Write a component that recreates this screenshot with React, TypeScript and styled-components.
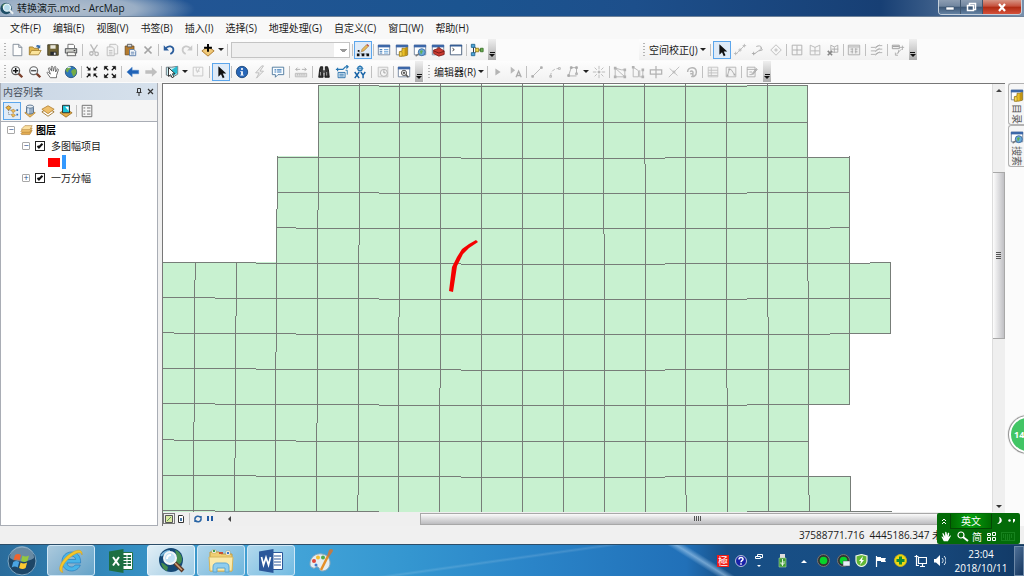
import React from 'react';
import styled, { createGlobalStyle, css } from 'styled-components';

const GlobalStyle = createGlobalStyle`
  *, *::before, *::after { box-sizing: border-box; }
  html, body { margin: 0; padding: 0; }
  body {
    font-family: "Open Sans", "Noto Sans CJK SC", sans-serif;
    font-size: 10px;
    line-height: 14px;
    color: #1a1a1a;
    overflow: hidden;
  }
  button { font: inherit; color: inherit; padding: 0; border: 0; background: none; }
  ul { list-style: none; margin: 0; padding: 0; }
`;

/* ---------- icons ---------- */

const G = '#b9b9b9';

const windowFrame = (
  <>
    <path d="M1.500 2.500h13v11h-13z" fill="#fff" stroke="#6d7f99" />
    <path d="M1 2h14v3H1z" fill="#3c67a8" />
  </>
);
const cursor = <path d="M5 1.500v12l3-2.800 2 4.300 2-1-2-4.200h4z" fill="#111" />;

const icons: Record<string, React.ReactNode> = {
  new: <path d="M3.500 1.500h6.500l3.500 3.500v9.500h-10zM10 1.500V5h3.500" fill="#fdfdfd" stroke="#7c8794" />,
  open: (
    <>
      <path d="M1.500 13.500v-9h4l1.500 1.500h5v3" fill="#e3b74d" stroke="#9c7a2c" />
      <path d="M1.500 13.500 4 8.500h11l-3 5z" fill="#fbe49b" stroke="#a88533" />
      <path d="M9 4c1-2 3-2 4-1l1-1v4h-4l1.500-1.500" fill="#3a6ea8" />
    </>
  ),
  save: (
    <>
      <path d="M2 2h12v12H2z" fill="#6e6234" stroke="#3d3823" />
      <path d="M5 2.500h6v4H5z" fill="#e9e7da" />
      <path d="M5 10h7v4H5z" fill="#262a30" />
      <path d="M9 11h2v2.500H9z" fill="#eee" />
    </>
  ),
  print: (
    <>
      <path d="M4.500 6V1.500h6l1.500 1.500v3" fill="#fff" stroke="#666" />
      <path d="M1.500 6.500h13v5h-13z" fill="#cfd0cb" stroke="#3f4246" />
      <path d="M4 10.500h8.500l1 4h-10z" fill="#f4f4f0" stroke="#555" />
      <path d="M11 8h2v1h-2z" fill="#333" />
    </>
  ),
  cut: (
    <g fill="none" stroke={G} strokeWidth="1.500">
      <path d="M4 1.500 9.500 11M12 2 6 11" />
      <circle cx="5" cy="12" r="2" />
      <circle cx="11" cy="12.500" r="2" />
    </g>
  ),
  copy: (
    <g fill="#f4f4f4" stroke={G}>
      <path d="M5.500 1.500h7l2 2v9h-9z" />
      <path d="M2.500 4.500h6l2 2v8h-8zM4.500 8.500h4M4.500 10.500h4M4.500 12.500h4" />
    </g>
  ),
  paste: (
    <>
      <path d="M2.500 3.500h10v10h-10z" fill="#b57b2d" stroke="#75501f" />
      <path d="M5 1.500h5v3H5z" fill="#ddd" stroke="#555" />
      <path d="M7.500 7.500h5l2 2v5h-7z" fill="#fff" stroke="#4e76a8" />
      <path d="M9 10.500h4M9 12.500h4" stroke="#4e76a8" />
    </>
  ),
  del: <path d="m4 4 8 8M12 4l-8 8" stroke="#a4a4a4" strokeWidth="2" />,
  undo: (
    <>
      <path d="M4 6.500c3-4.500 9.500-3 9 2-.2 2-1.500 3.200-3.500 4" fill="none" stroke="#2b5d9c" strokeWidth="2" />
      <path d="M2 2.500v6h6z" fill="#2b5d9c" />
    </>
  ),
  redo: (
    <>
      <path d="M12 6.500c-3-4.500-9.500-3-9 2 .2 2 1.500 3.200 3.500 4" fill="none" stroke="#cacaca" strokeWidth="2" />
      <path d="M14 2.500v6H8z" fill="#cacaca" />
    </>
  ),
  add: (
    <>
      <path d="m1 9 7-5 7 5-7 6z" fill="#f1c978" stroke="#a8762c" />
      <path d="M8 1v9M3.500 5.500h9" stroke="#000" strokeWidth="2.200" />
    </>
  ),
  editor: (
    <>
      <path d="M3 9.500 6 12.500h7" fill="none" stroke="#444" strokeDasharray="1 1" />
      <path d="M1 12h3v3H1zM6.500 12h3v3h-3zM12 12h3v3h-3zM2 8h2v2H2z" fill="#111" />
      <path d="m6 10 1-3 5-5 2 2-5 5z" fill="#e8b95a" stroke="#8e6530" strokeWidth=".6" />
      <path d="m12 2 1-1 2 2-1 1z" fill="#b64545" />
    </>
  ),
  toc: <>{windowFrame}<path d="M3 7.500h3M3 9.500h3M3 11.500h3" stroke="#2b6cb0" /><path d="M8 7.500h5M8 9.500h5M8 11.500h5" stroke="#5b9bd5" /></>,
  catalog: <>{windowFrame}<path d="m5 10 3-1V6h3l3-1v9l-4 1H5z" fill="#e9bf28" stroke="#8d6b10" strokeWidth=".8" /><path d="M11 6v8l3-1V5z" fill="#c29512" /><path d="M5 10h3v5H5z" fill="#f4d95c" stroke="#8d6b10" strokeWidth=".6" /></>,
  search: <>{windowFrame}<circle cx="10" cy="10.500" r="4" fill="#69a9d8" stroke="#3a6ba2" /><path d="M8 9c2-2 4 0 3 1s-1 3-2 3" fill="#5fae52" /><path d="m3 15 4-3" stroke="#777" strokeWidth="1.500" /></>,
  toolbox: <>{windowFrame}<path d="m3 8 7-2 5 3v4l-6 2-6-3z" fill="#cb3a30" stroke="#86211b" /><path d="m3 9 6 2.500 6-2M7 6.500c0-2 3-2 3-.5" fill="none" stroke="#6d1814" /></>,
  python: <><path d="M1.500 2.500h13v11h-13z" fill="#fff" stroke="#3d5575" /><path d="M1 2h14v2H1z" fill="#355d95" /><path d="m4 6 2 1.500L4 9" fill="none" stroke="#222" /></>,
  model: (
    <>
      <path d="M4 3.500v9M5 4l3 4-3 4M8 8h5" fill="none" stroke="#222" />
      <path d="M1.500 1.500h4v3.500h-4zM1.500 11h4v3.500h-4z" fill="#4ea4d9" stroke="#246891" />
      <path d="M6.500 6h3.500v4H6.500z" fill="#f2d74a" stroke="#93811c" />
      <path d="M12 6h3v4h-3z" fill="#68ad50" stroke="#3c7229" />
    </>
  ),
  zoomin: <><circle cx="6.500" cy="6.500" r="4.500" fill="#fafdff" stroke="#555" strokeWidth="1.400" /><path d="M6.500 3.500v6M3.500 6.500h6" stroke="#111" strokeWidth="1.700" /><path d="m10 10 4 4" stroke="#7a3f2b" strokeWidth="2.800" /></>,
  zoomout: <><circle cx="6.500" cy="6.500" r="4.500" fill="#fafdff" stroke="#666" strokeWidth="1.400" /><path d="M3.500 6.500h6" stroke="#555" strokeWidth="1.700" /><path d="m10 10 4 4" stroke="#7a3f2b" strokeWidth="2.800" /></>,
  pan: <path d="M5 14.500 1.500 9.500c-1-1 .5-2 1.500-1l2 2L3 4.500c-.5-1.500 1-2 1.500-.5L6.500 7 6 2.500c0-1.500 1.500-1.500 1.800 0L8.500 7l1-4.500c.3-1.300 1.800-1 1.700.3L11 8l1.500-3c.7-1.200 2-.5 1.600.7L12 12v2.500z" fill="#fff" stroke="#5e5e5e" />,
  globe: <><circle cx="8" cy="8" r="6.500" fill="#2f78bb" stroke="#25527e" /><path d="M5 2.500c4-1 3 2 1 3s0 2-2 3l-2-2c.5-2 1.500-3.500 3-4M9 6c2-2 4-2 5-.5 1 3-.5 6-3 7.500-2-1-1-2.500-2-3.500s-1-2.500 0-3.500" fill="#74ac47" /><path d="M4 3c1.500-1 3-.8 3.500 0" stroke="#e9f4fa" strokeWidth="1.500" fill="none" /></>,
  fixedin: <g stroke="#111" strokeWidth="1.500" fill="#111"><path d="m2 2 3 3M14 2l-3 3M2 14l3-3M14 14l-3-3" /><path d="M3 6h3V3zM13 6h-3V3zM3 10h3v3zM13 10h-3v3z" strokeWidth=".5" /></g>,
  fixedout: <g stroke="#111" strokeWidth="1.500" fill="#111"><path d="m3 3 3 3M13 3l-3 3M3 13l3-3M13 13l-3-3" /><path d="M1.500 5.500v-4h4zM14.500 5.500v-4h-4zM1.500 10.500v4h4zM14.500 10.500v4h-4z" strokeWidth=".5" /></g>,
  back: <path d="m1 8 6-5.500V6h7.500v4H7v3.500z" fill="#1f62b7" stroke="#4d86c9" strokeWidth=".6" />,
  fwd: <path d="M15 8 9 2.500V6H1.500v4H9v3.500z" fill="#bfbfbf" />,
  select: <><path d="M1.500 2.500h6l7-1v9l-5 3-8-2z" fill="#c7eef2" stroke="#606d75" /><path d="m7 6 7-5v8l-6 4z" fill="#28bdd3" /><path d="M4 3v10l2.500-2 1.500 3.500 2-1-1.500-3.500h3z" fill="#fff" stroke="#222" /></>,
  clear: <path d="M2.500 2.500h11v10h-11zM6 3v4h4M10 3 7 9" fill="none" stroke="#c5c5c5" />,
  cursor,
  info: <><circle cx="8" cy="8" r="6.500" fill="#2867b8" stroke="#194579" /><circle cx="8" cy="4.500" r="1.200" fill="#fff" /><path d="M6 7h3v4h1v1H6v-1h1V8H6z" fill="#fff" /></>,
  bolt: <path d="m10 1-7 8h4l-3 6 8-8H8l4-6z" fill="#eee" stroke={G} />,
  popup: <><path d="M1.500 2.500h13v8.500H8L5 14v-3H1.500z" fill="#f8fcff" stroke="#477298" /><path d="M4 5.500h2M7 5.500h5M4 8h2M7 8h5" stroke="#3879b9" strokeWidth="1.300" /></>,
  measure: <><path d="M1.500 9.500h13v4h-13zM4 10v2M6.500 10v2M9 10v2M11.500 10v2" fill="#ddd" stroke="#bbb" /><path d="M2 5h5M9 5h5M4 3 2 5l2 2M12 3l2 2-2 2" fill="none" stroke="#aaa" /></>,
  find: <><path d="M2 14 3 5l1-3h2.500v3L7 14zM14 14l-1-9-1-3H9.500v3L9 14z" fill="#343434" stroke="#111" /><path d="M6.500 6h3v3h-3z" fill="#555" /><path d="M4 8v4M11 8v4" stroke="#aaa" /></>,
  route: <><path d="M1 5h8l3-3M12 2h3M13 0l2 2-2 2M3 3v4" fill="none" stroke="#2475b2" strokeWidth="1.300" /><path d="M3.500 8.500h8v6h-8z" fill="#e2f0fa" stroke="#246ba6" /><path d="M5 10.500h5M5 12.500h5" stroke="#246ba6" /><path d="M12 6h2v5" fill="none" stroke="#2475b2" /></>,
  xy: <><circle cx="8" cy="4" r="2.500" fill="#fff" stroke="#2475b2" strokeWidth="1.500" /><path d="M8 0v8M4 4h8" stroke="#2475b2" strokeWidth=".7" /><path d="m2 8 5 7M7 8l-5 7M9 8l2.500 3.500L14 8M11.500 11.500V15" fill="none" stroke="#1662a6" strokeWidth="1.700" /></>,
  time: <><path d="M2.500 2.500h11v11h-11z" fill="#eee" stroke="#c0c0c0" /><circle cx="9" cy="9" r="4" fill="#f5f5f5" stroke="#aaa" /><path d="M9 6v3h2" fill="none" stroke="#999" /></>,
  viewer: <>{windowFrame}<circle cx="8" cy="9" r="3" fill="#fff" stroke="#444" /><path d="M6.500 9h3M8 7.500v3" stroke="#222" /><path d="m10 11 3 3" stroke="#555" strokeWidth="1.700" /></>,
  play: <path d="m5 4 6 4-6 4z" fill="#b4b4b4" />,
  playA: <><path d="m2 2 5 4-5 4z" fill={G} /><path d="m8 14 3-7 3 7M9 12h4" fill="none" stroke="#aaa" strokeWidth="1.500" /></>,
  line: <g stroke="#b2b2b2" fill="#aaa"><path d="M3 13 13 3" /><path d="M2 12h2v2H2zM12 2h2v2h-2z" /></g>,
  arc: <g stroke="#b2b2b2" fill="none"><path d="M3 13c0-6 4-9 9-9" strokeDasharray="4 2" /><path d="M2 12h2v2H2zM12 3h2v2h-2z" /></g>,
  trace: <g stroke="#aaa" fill="none"><path d="M2 12.500h10M3 12 6 3h6v7M11 9h2v2h-2z" /><path d="M5 2h2v2H5zM2 11h2v2H2zM11 2h2v2h-2z" fill="#aaa" /></g>,
  burst: <g stroke="#b5b5b5"><path d="M8 1v4M8 11v4M1 8h4M11 8h4M3 3l2.500 2.500M13 3l-2.500 2.500M3 13l2.500-2.500M13 13l-2.500-2.500" /><path d="M7 7h2v2H7z" fill="#aaa" /></g>,
  reshape: <g fill="none" stroke="#b2b2b2"><path d="M2.500 3.500v10h11v-8h-4zM2.500 3.500l11 10" /><path d="M2 3h1v1H2zM13 5h1v1h-1zM2 13h1v1H2zM13 13h1v1h-1z" strokeWidth="2" /></g>,
  cutpoly: <g fill="none" stroke="#b2b2b2"><path d="M2.500 2.500v11h6v-7zM10.500 13.500h3v-8M10 6v8" /><path d="M2 2h1v1H2zM13 5h1v1h-1zM13 13h1v1h-1z" strokeWidth="2" /></g>,
  split: <path d="M1.500 5.500h13v5h-13zM8 1v14" fill="none" stroke="#b2b2b2" strokeWidth="1.400" />,
  cross: <path d="m2 14 12-12M3 4l9 8M7 7h2v2H7z" fill="none" stroke={G} />,
  rotate: <path d="M3 8c0-6 10-7 10 0 0 4-3 6-6 5M6 8c1-2 4-1 3 2M6 10l3 0 0 3" fill="none" stroke="#b5b5b5" strokeWidth="1.700" />,
  table: <path d="M2.500 2.500h11v11h-11zM2.500 6h11M2.500 9h11M2.500 12h11M6 3v10" fill="#f2f2f2" stroke="#c0c0c0" />,
  sketch: <><path d="M2.500 2.500h11v11h-11z" fill="#f2f2f2" stroke="#b2b2b2" /><path d="m4 12 2-7h2l4 6" fill="none" stroke="#aaa" /><path d="M5 4h2v2H5zM11 10h2v2h-2zM3 11h2v2H3z" fill="#aaa" /></>,
  edit: <g fill="none" stroke="#aaa"><path d="M2.500 2.500h9v11h-9zM2.500 5h9M5 8h3M5 11h3" /><path d="m8 10 5-6 1 1-5 6z" fill="#bbb" /></g>,
  linkbig: <g stroke="#b8b8b8" fill="#b8b8b8"><path d="M3 13 13 3" fill="none" /><path d="M1 12h4M3 10v4M11 3h4M13 1v4M6 8h4M8 6v4" /></g>,
  linkcurve: <g stroke="#aaa" fill="none"><path d="m3 13 7-5c4-3 1-6-4-4M11 5l2 3-4 1M1 12h4M3 10v4" /></g>,
  diamond: <g fill="none" stroke="#b8b8b8"><path d="m8 2 6 6-6 6-6-6z" /><path d="M8 6v4M6 8h4" /></g>,
  grid: <path d="M2.500 2.500h11v11h-11zM8 3v10M3 8h10" fill="none" stroke="#aaa" />,
  gridbend: <path d="M2.500 2.500 8 5l5.500-2.500v11h-11zM8 5v8M3 9h10" fill="none" stroke="#b5b5b5" />,
  gridx: <><path d="m5.500 2.500 4 2 4-2v8h-8zM9.500 5v6M6 7h8" fill="none" stroke="#aaa" /><path d="m2 9 5 5M7 9l-5 5" stroke="#888" strokeWidth="1.800" /></>,
  linktable: <><path d="M1.500 2.500h13v11h-13zM2 4.500h12" fill="#eee" stroke="#aaa" /><path d="M4 7h3M9 7h3M4 10h3M9 10h3M6 6v6M10 6v6" stroke="#aaa" /></>,
  match: <path d="m1 5 5 0 3-2 5 0M1 9l5 0 3-2 5 0M1 13l5 0 3-2 5 0M11 2 6 6M11 6l-5 4M11 10l-5 4" fill="none" stroke="#aaa" />,
  attr: <><path d="M1.500 2.500h8v4h-8zM2 4h7" fill="#eee" stroke="#999" /><path d="m6 13 6-6M10 5h5M13 3v5M9 8l-1 4M5 11v3h3" fill="none" stroke="#aaa" /></>,
  listOrder: <><path d="M4 5v7h3M4 7h4" stroke="#777" fill="none" strokeDasharray="1 1" /><path d="m1 4 3-2 3 2-3 3z" fill="#eeb53d" stroke="#9b702d" /><path d="m7 7 3-1 2 2-3 2zM7 12l3-1 2 2-3 2z" fill="#efbd59" stroke="#9b702d" strokeWidth=".6" /><path d="M13 7h2M13 12h2" stroke="#3372b8" strokeWidth="2" /></>,
  cylinder: <><path d="m2 10 6 5 6-5-6-3z" fill="#f0bd5e" stroke="#ba8c3c" /><path d="M4 3v7c1 2 7 2 8 0V3" fill="#95adc6" stroke="#526c88" /><ellipse cx="8" cy="3" rx="4" ry="1.800" fill="#e8f0f6" stroke="#526c88" /><path d="M6 5v6" stroke="#dbe7f1" strokeWidth="2" /></>,
  layers: <><path d="m1 9 7 5 7-5-7-4z" fill="#fff" stroke="#9b7127" /><path d="m1 6 7-4 7 4-7 5z" fill="#eebf6c" stroke="#b68638" /></>,
  layersel: <><path d="m1 10 7 5 7-5-7-4z" fill="#e7b04a" stroke="#9b7127" /><path d="M4 1.500h8V10H4z" fill="#18c2d8" stroke="#222" /><path d="M7 3h4v5z" fill="#fff" /></>,
  options: <path d="M2.500 1.500h11v13h-11zM4 4.500h2M8 4.500h4M4 8h2M8 8h4M4 11.500h2M8 11.500h4" fill="none" stroke="#666" />,
  stack: <g stroke="#a8762c" strokeWidth=".7"><path d="m1 12 4-4h10l-3 5H2z" fill="#e3ab51" /><path d="m1 9 4-4h10l-3 5H2z" fill="#f3c46f" /><path d="m2 6 4-4h9l-3 5H2z" fill="#fbe0a1" /></g>,
};

const Svg = styled.svg<{ $size: number }>`
  display: block;
  flex: none;
  width: ${(p) => p.$size}px;
  height: ${(p) => p.$size}px;
`;
const Icon = ({ name, size = 14 }: { name: string; size?: number }) => (
  <Svg $size={size} viewBox="0 0 16 16" aria-hidden="true">{icons[name]}</Svg>
);

/* ---------- window frame ---------- */

const Desktop = styled.div`
  display: flex;
  flex-direction: column;
  height: 100vh;
  background: #f0f0f0;
`;
const TitleBar = styled.header`
  display: flex;
  align-items: center;
  flex: none;
  height: 17px;
  padding-right: 2px;
  border-bottom: 1px solid #6e8299;
  background: radial-gradient(ellipse 130px 22px at 65px 9px, #b2bfce 0, #9aaec5 55%, transparent 100%),
    linear-gradient(90deg, #406da2 0, #225594 18%, #1b5490 45%, #1d4f8b 62%, #173f74 86%, #7890ac 100%);
`;
const Title = styled.h1`
  flex: 1;
  margin: 0;
  padding-left: 3px;
  font-size: 10px;
  font-weight: 400;
  line-height: 16px;
  color: #101820;
`;
const WindowButtons = styled.div`
  display: flex;
  align-self: flex-start;
  height: 15px;
  border: 1px solid #c5d0db;
  border-top: 0;
  border-radius: 0 0 4px 4px;
  overflow: hidden;
`;
const WindowButton = styled.button<{ $close?: boolean }>`
  display: grid;
  place-items: center;
  width: ${(p) => (p.$close ? 38 : 22)}px;
  border-right: ${(p) => (p.$close ? 0 : 1)}px solid #40566f;
  background: ${(p) => (p.$close ? 'linear-gradient(#d69585 0, #c5503c 45%, #ae2a12 50%, #d5513a)' : 'linear-gradient(#8c9db2 0, #71869f 45%, #3c5674 50%, #6482a3)')};
`;
const MenuBar = styled.nav`
  display: flex;
  align-items: center;
  flex: none;
  height: 22px;
  padding-left: 4px;
  background: #f8f8f8;
`;
const MenuItem = styled.button`
  padding: 0 6px;
  white-space: nowrap;
`;

/* ---------- toolbars ---------- */

const ToolDock = styled.div`
  flex: none;
  background: #fbfbfb;
`;
const ToolRow = styled.div`
  display: flex;
  height: 22px;
`;
const Toolbar = styled.div<{ $gap?: number }>`
  display: flex;
  align-items: center;
  height: 21px;
  margin-left: ${(p) => p.$gap ?? 0}px;
  background: linear-gradient(#fdfdfd, #f1f1f1);
`;
const Grip = styled.span`
  width: 2px;
  height: 14px;
  margin: 0 2px 0 4px;
  background: repeating-linear-gradient(#b5b5b5 0 1px, transparent 1px 3px);
`;
const ToolButton = styled.button<{ $on?: boolean }>`
  display: grid;
  place-items: center;
  width: 18px;
  height: 18px;
  ${(p) => p.$on && css`
    outline: 1px solid #5ca6ec;
    outline-offset: -1px;
    background: #dfebf8;
  `}
`;
const Sep = styled.span<{ $wide?: boolean }>`
  width: 1px;
  height: 12px;
  margin: 0 ${(p) => (p.$wide ? 2 : 1)}px;
  background: #c0c0c0;
`;
const Drop = styled.button`
  display: grid;
  place-items: center;
  width: 8px;
  height: 18px;
  &::before { content: ''; border: 3px solid transparent; border-top-color: #222; border-bottom: 0; }
`;
const TextDrop = styled.button`
  display: flex;
  align-items: center;
  gap: 2px;
  height: 18px;
  padding: 0 2px;
  white-space: nowrap;
  &::after { content: ''; border: 3px solid transparent; border-top-color: #222; border-bottom: 0; }
`;
const Overflow = styled.button`
  display: flex;
  flex-direction: column;
  align-items: center;
  justify-content: flex-end;
  gap: 1px;
  width: 8px;
  height: 21px;
  margin-left: 2px;
  padding-bottom: 3px;
  background: linear-gradient(#efefef, #adadad);
  &::before { content: ''; width: 5px; height: 1px; background: #111; }
  &::after { content: ''; border: 3px solid transparent; border-top-color: #111; border-bottom: 0; }
`;
const ScaleSelect = styled.select`
  appearance: none;
  width: 119px;
  height: 16px;
  margin: 0 1px;
  border: 1px solid #c4c4c4;
  border-radius: 0;
  opacity: 1;
  background: linear-gradient(#999, #999) 108px 6px / 7px 1px no-repeat,
    linear-gradient(#999, #999) 109px 7px / 5px 1px no-repeat,
    linear-gradient(#999, #999) 110px 8px / 3px 1px no-repeat,
    linear-gradient(90deg, #efefef 102px, #fff 102px);
`;

/* '|' is a divider, '||' a wide one, 'v' a drop-down arrow, '*' marks the active tool */
const Tools = ({ items }: { items: string }) => (
  <>
    {items.split(' ').map((t, i) => {
      if (t === '|') return <Sep key={i} />;
      if (t === '||') return <Sep key={i} $wide />;
      if (t === 'v') return <Drop key={i} aria-label="更多" />;
      const name = t.replace('*', '');
      return (
        <ToolButton key={i} $on={t.endsWith('*')} aria-label={name}>
          <Icon name={name} />
        </ToolButton>
      );
    })}
  </>
);

/* ---------- contents panel ---------- */

const Main = styled.main`
  display: flex;
  flex: 1;
  min-height: 0;
`;
const Panel = styled.aside`
  display: flex;
  flex-direction: column;
  flex: none;
  width: 158px;
  margin-right: 4px;
  border: 1px solid #a9adb5;
  border-top: 0;
  background: #fff;
`;
const PanelHead = styled.div`
  display: flex;
  align-items: center;
  height: 17px;
  padding: 0 1px 0 2px;
  background: linear-gradient(90deg, #cad6e4, #d6e1ec);
`;
const PanelTitle = styled.h2`
  flex: 1;
  margin: 0;
  font-size: 10px;
  font-weight: 400;
  color: #444c57;
`;
const PanelButton = styled.button`
  display: grid;
  place-items: center;
  width: 12px;
  height: 14px;
`;
const PanelTools = styled.div`
  display: flex;
  align-items: center;
  height: 22px;
  padding-left: 2px;
  border-bottom: 1px solid #a9adb5;
  background: #f5f5f5;
`;
const Tree = styled.ul`
  padding-top: 0;
`;
const TreeRow = styled.li<{ $level?: number }>`
  display: flex;
  align-items: center;
  gap: 5px;
  height: 16px;
  padding-left: ${(p) => 6 + (p.$level ?? 0) * 15}px;
`;
const Expander = styled.button`
  display: grid;
  place-items: center;
  width: 8px;
  height: 8px;
  border: 1px solid #a8a8a8;
  border-radius: 1px;
  font-size: 9px;
  line-height: 6px;
  color: #2e4b88;
`;
const Root = styled.strong`
  font-weight: 700;
  margin-left: -2px;
  color: #000;
`;
const LayerLabel = styled.label`
  display: flex;
  align-items: center;
  gap: 5px;
`;
const Check = styled.input`
  appearance: none;
  width: 10px;
  height: 10px;
  margin: 0 1px 0 0;
  border: 1px solid #222;
  background: #fff;
  display: grid;
  place-items: center;
  &:checked::before {
    content: '';
    width: 6px;
    height: 3px;
    margin-top: -2px;
    border: solid #111;
    border-width: 0 0 2px 2px;
    transform: rotate(-45deg);
  }
`;
const SymbolRow = styled.li`
  display: flex;
  align-items: center;
  gap: 2px;
  height: 16px;
  padding-left: 47px;
`;
const Swatch = styled.span`
  width: 12px;
  height: 9px;
  background: #f00;
`;
const Caret = styled.span`
  width: 4px;
  height: 14px;
  background: #3399ff;
`;

/* ---------- map ---------- */

const MapColumn = styled.section`
  display: flex;
  flex-direction: column;
  flex: 1;
  min-width: 0;
  border-left: 1px solid #777;
  border-top: 1px solid #777;
`;
const MapRow = styled.div`
  display: flex;
  flex: 1;
  min-height: 0;
`;
const MapView = styled.svg`
  display: block;
  flex: 1;
  min-width: 0;
  width: 100%;
  height: 100%;
  background: #fff;
`;
const VScroll = styled.div`
  display: flex;
  flex-direction: column;
  align-items: center;
  flex: none;
  width: 13px;
  padding: 5px 0 4px;
  border-left: 1px solid #ddd;
  background: #efefef;
`;
const Arrow = styled.span<{ $dir: 'up' | 'down' | 'left' }>`
  border: 3px solid transparent;
  ${(p) => p.$dir === 'up' && css`border-bottom-color: #444; border-top: 0;`}
  ${(p) => p.$dir === 'down' && css`border-top-color: #333; border-bottom: 0;`}
  ${(p) => p.$dir === 'left' && css`border-right-color: #444; border-left: 0; margin: 0 4px 0 12px;`}
`;
const VTrack = styled.div`
  display: flex;
  flex-direction: column;
  flex: 1;
  width: 100%;
  padding-top: 80px;
`;
const VThumb = styled.div`
  display: grid;
  place-items: center;
  height: 50%;
  border: 1px solid #a8a8a8;
  border-width: 1px 1px 1px 0;
  background: linear-gradient(90deg, #fdfdfd, #c0c0c4);
  &::before { content: ''; width: 5px; height: 7px; background: repeating-linear-gradient(#555 0 1px, transparent 1px 2px); }
`;
const HBar = styled.div`
  display: flex;
  align-items: center;
  flex: none;
  height: 14px;
  padding-bottom: 1px;
  background: #efefef;
`;
const ViewButton = styled.button<{ $on?: boolean }>`
  display: grid;
  place-items: center;
  width: 12px;
  height: 11px;
  border: ${(p) => (p.$on ? 1 : 0)}px solid #777;
`;
const HTrack = styled.div`
  display: flex;
  flex: 1;
  height: 12px;
  padding: 0 30px 0 22%;
`;
const HThumb = styled.div`
  display: grid;
  place-items: center;
  flex: 1;
  border: 1px solid #a8a8a8;
  background: linear-gradient(#fafafa, #bcbcbf);
  &::before { content: ''; width: 7px; height: 5px; background: repeating-linear-gradient(90deg, #555 0 1px, transparent 1px 2px); }
`;
const SideTabs = styled.aside`
  display: flex;
  flex-direction: column;
  flex: none;
  width: 19px;
  padding-left: 3px;
  background: #fbfbfb;
`;
const SideTab = styled.button`
  display: flex;
  flex-direction: column;
  align-items: center;
  gap: 2px;
  height: 42px;
  padding-top: 4px;
  border: 1px solid #b2b2b2;
  border-right: 0;
  border-radius: 3px 0 0 3px;
  background: #f6f6f6;
`;
const TabText = styled.span`
  writing-mode: vertical-rl;
  text-orientation: sideways;
  color: #555;
`;

type Pattern = 'a' | 'b' | 'c';
/* x positions where the sheet edges step by a pixel: two down, then back up */
const steps: Record<Pattern, [number, number][]> = {
  a: [[93, 1], [298, 1], [502, -1], [707, -1]],
  b: [[52, 1], [216, 1], [584, -1]],
  c: [[11, 1], [133, 1], [667, -1]],
};
const rows: { y: number; p: Pattern; from: number; to: number }[] = [
  { y: 2, p: 'b', from: 155, to: 644 },
  { y: 38, p: 'c', from: 155, to: 644 },
  { y: 74, p: 'a', from: 114, to: 686 },
  { y: 109, p: 'b', from: 114, to: 686 },
  { y: 144, p: 'c', from: 114, to: 686 },
  { y: 180, p: 'a', from: 0, to: 727 },
  { y: 215, p: 'b', from: 0, to: 727 },
  { y: 250, p: 'c', from: 0, to: 727 },
  { y: 286, p: 'a', from: 0, to: 686 },
  { y: 321, p: 'b', from: 0, to: 686 },
  { y: 357, p: 'c', from: 0, to: 645 },
  { y: 393, p: 'a', from: 0, to: 687 },
  { y: 428, p: 'b', from: 0, to: 728 },
];
const rowPath = (r: (typeof rows)[number]) => {
  let y = r.y - 2;
  steps[r.p].forEach(([x, dy]) => {
    if (x <= r.from) y += dy;
  });
  let d = `M${r.from} ${y + 0.5}`;
  steps[r.p].forEach(([x, dy]) => {
    if (x > r.from && x < r.to) {
      y += dy;
      d += `H${x}M${x} ${y + 0.5}`;
    }
  });
  return `${d}H${r.to + 1}`;
};
const columns: { x: number; from: number; to?: number; at: number[]; dir: number }[] = [
  { x: 32, from: 179, at: [196, 338], dir: -1 },
  { x: 73, from: 179, at: [232, 374], dir: -1 },
  { x: 114, from: 72, at: [125, 268], dir: -1 },
  { x: 155, from: 1, at: [126, 339], dir: -1 },
  { x: 196, from: 0, at: [161, 411], dir: -1 },
  { x: 236, from: 0, at: [233], dir: -1 },
  { x: 277, from: 0, at: [304], dir: -1 },
  { x: 318, from: 0, at: [], dir: 1 },
  { x: 359, from: 0, at: [], dir: 1 },
  { x: 400, from: 0, at: [], dir: 1 },
  { x: 440, from: 0, at: [150], dir: 1 },
  { x: 481, from: 0, at: [80], dir: 1 },
  { x: 522, from: 0, at: [411], dir: 1 },
  { x: 563, from: 0, at: [304], dir: 1 },
  { x: 604, from: 0, at: [233], dir: 1 },
  { x: 644, from: 1, at: [197, 411], dir: 1 },
  { x: 686, from: 72, to: 321, at: [], dir: 1 },
  { x: 687, from: 392, at: [], dir: 1 },
  { x: 727, from: 178, to: 250, at: [], dir: 1 },
];
const columnPath = (c: (typeof columns)[number]) => {
  let x = c.x;
  let d = `M${x + 0.5} ${c.from}`;
  c.at.forEach((y) => {
    x += c.dir;
    d += `V${y}M${x + 0.5} ${y}`;
  });
  return `${d}V${c.to ?? 440}`;
};

const SheetMap = () => (
  <MapView viewBox="0 0 829 428" preserveAspectRatio="xMinYMin slice" role="img" aria-label="一万分幅">
    <path
      d="M155 1H645V73H686V179H727V250H686V321H645V392H688V440H0V178H114V72H155z"
      fill="#c8f1d0"
    />
    <g fill="none" stroke="#777d78" shapeRendering="crispEdges">
      {rows.map((r) => <path key={r.y} d={rowPath(r)} />)}
      {columns.map((c) => <path key={c.x} d={columnPath(c)} />)}
    </g>
    <path d="m313 156 2 2-9 6-6 6-6 12-4 26-4-1 3-24 5-10 5-8 7-5z" fill="#f40000" />
  </MapView>
);

const StatusBar = styled.footer`
  display: flex;
  align-items: center;
  justify-content: flex-end;
  flex: none;
  height: 18px;
  padding-right: 82px;
  white-space: pre;
`;

/* ---------- taskbar ---------- */

const Taskbar = styled.div`
  display: flex;
  flex: none;
  height: 32px;
  border-top: 1px solid #2c4d68;
  background: linear-gradient(212deg, transparent 42%, rgba(170, 208, 240, .6) 50%, transparent 58%) 666px 0 / 70px 100% no-repeat,
    linear-gradient(172deg, transparent 47%, rgba(255, 255, 255, .13) 50%, transparent 53%) 360px 0 / 280px 100% no-repeat,
    linear-gradient(90deg, #2a6c9c 0, #348dc0 12%, #43a4d8 28%, #3496d0 40%, #2a84c8 52%, #2170b8 67%, #174f86 71%, #184c82 88%, #123a66 100%);
`;
const StartButton = styled.button`
  display: grid;
  place-items: center;
  width: 43px;
  margin-right: 4px;
`;
const AppButton = styled.button<{ $look?: 'open' | 'active' }>`
  display: grid;
  place-items: center;
  width: 48px;
  height: 31px;
  margin-right: 2px;
  border: 1px solid transparent;
  border-radius: 3px;
  ${(p) => p.$look === 'open' && css`
    border-color: #cfe7f6;
    background: linear-gradient(135deg, rgba(255, 255, 255, .6), rgba(255, 255, 255, .25));
  `}
  ${(p) => p.$look === 'active' && css`
    border-color: #e6f4fc;
    background: linear-gradient(135deg, rgba(255, 255, 255, .85), rgba(255, 255, 255, .5));
  `}
`;
const Tray = styled.div`
  display: flex;
  align-items: center;
  margin-left: auto;
`;
const TrayButton = styled.button<{ $w?: number }>`
  display: grid;
  place-items: center;
  width: ${(p) => p.$w ?? 19}px;
  height: 31px;
`;
const Seal = styled.span`
  display: grid;
  place-items: center;
  width: 12px;
  height: 12px;
  background: #ee1c16;
  color: #fff;
  line-height: 12px;
`;
const Clock = styled.time`
  width: 60px;
  margin-left: 2px;
  text-align: center;
  color: #fff;
`;
const ShowDesktop = styled.button`
  width: 10px;
  height: 30px;
  margin-left: 3px;
  border: 1px solid #6d89a8;
  background: linear-gradient(120deg, #4d6f96, #15365f);
`;

/* ---------- floating widgets ---------- */

const ImeBar = styled.div`
  position: absolute;
  right: 4px;
  bottom: 32px;
  display: grid;
  grid-template-rows: 16px 15px;
  width: 83px;
  border-radius: 2px;
  background: #036b08;
  color: #fff;
  overflow: hidden;
`;
const ImeRow = styled.div`
  display: flex;
  align-items: center;
`;
const ImeButton = styled.button<{ $w: number; $on?: boolean }>`
  display: grid;
  place-items: center;
  width: ${(p) => p.$w}px;
  height: 15px;
  ${(p) => p.$on && css`background: linear-gradient(90deg, #006b00, #079c10, #006b00); border: 1px solid #044704; border-top: 0;`}
`;
const BallSlot = styled.div`
  position: absolute;
  right: 0;
  top: 414px;
  width: 17px;
  height: 42px;
  overflow: hidden;
`;
const Ball = styled.button`
  display: flex;
  align-items: center;
  width: 37px;
  height: 37px;
  margin: 2px;
  padding-left: 3px;
  border: 2px solid #fff;
  border-radius: 50%;
  box-shadow: 0 0 1px 1px #888;
  background: #42c565;
  color: #fff;
  font-weight: 700;
  font-size: 9px;
`;

const menus = ['文件(F)', '编辑(E)', '视图(V)', '书签(B)', '插入(I)', '选择(S)', '地理处理(G)', '自定义(C)', '窗口(W)', '帮助(H)'];

export default function App() {
  return (
    <Desktop>
      <GlobalStyle />
      <TitleBar>
        <svg width="14" height="15" viewBox="0 0 16 16" aria-hidden="true">
          <circle cx="7" cy="8" r="6.500" fill="#1e4e66" />
          <path d="M3 4c3-3 6-1 5 1s-3 3-5 2z" fill="#6aa35a" />
          <circle cx="8" cy="7" r="4" fill="#b7dcec" stroke="#e8f5fa" strokeWidth="1.500" />
          <path d="m11 10 4 4" stroke="#e9eef0" strokeWidth="2.500" />
        </svg>
        <Title>转换演示.mxd - ArcMap</Title>
        <WindowButtons>
          <WindowButton aria-label="最小化"><svg width="10" height="8"><path d="M1 4h8v3H1z" fill="#fff" stroke="#344e6b" strokeWidth=".6" /></svg></WindowButton>
          <WindowButton aria-label="还原"><svg width="11" height="10" fill="none" stroke="#fff" strokeWidth="1.500"><path d="M3.500 3V1.500h6v6H8" /><path d="M1.500 3.500h6v5h-6z" /></svg></WindowButton>
          <WindowButton $close aria-label="关闭"><svg width="10" height="9"><path d="m2 1 6 7M8 1 2 8" stroke="#fff" strokeWidth="2.200" /></svg></WindowButton>
        </WindowButtons>
      </TitleBar>
      <MenuBar>
        {menus.map((m) => <MenuItem key={m}>{m}</MenuItem>)}
      </MenuBar>

      <ToolDock>
        <ToolRow>
          <Toolbar>
            <Grip />
            <Tools items="new open save print || cut copy paste del | undo redo | add v ||" />
            <ScaleSelect aria-label="比例尺" disabled />
            <Tools items="| editor* | toc catalog search toolbox python | model" />
            <Overflow aria-label="工具条选项" />
          </Toolbar>
          <Toolbar $gap={143}>
            <Grip />
            <TextDrop>空间校正(J)</TextDrop>
            <Tools items="|| cursor* linkbig linkcurve diamond | grid gridbend gridx | linktable || match | attr" />
            <Overflow aria-label="工具条选项" />
          </Toolbar>
        </ToolRow>
        <ToolRow>
          <Toolbar>
            <Grip />
            <Tools items="zoomin zoomout pan globe | fixedin fixedout || back fwd | select v clear || cursor* | info bolt popup || measure || find route xy || time | viewer" />
            <Overflow aria-label="工具条选项" />
          </Toolbar>
          <Toolbar $gap={1}>
            <Grip />
            <TextDrop>编辑器(R)</TextDrop>
            <Tools items="| play playA | line arc trace v burst | reshape cutpoly split cross rotate | table sketch | edit" />
            <Overflow aria-label="工具条选项" />
          </Toolbar>
        </ToolRow>
      </ToolDock>

      <Main>
        <Panel>
          <PanelHead>
            <PanelTitle>内容列表</PanelTitle>
            <PanelButton aria-label="自动隐藏"><svg width="7" height="8" fill="none" stroke="#333"><path d="M1.500 4.500h5M2.500 4V.5h3V4M4 5v3" /></svg></PanelButton>
            <PanelButton aria-label="关闭"><svg width="7" height="7" stroke="#333" strokeWidth="1.200"><path d="m1 1 5 5M6 1 1 6" /></svg></PanelButton>
          </PanelHead>
          <PanelTools>
            <Tools items="listOrder* cylinder layers layersel | options" />
          </PanelTools>
          <Tree>
            <TreeRow>
              <Expander aria-label="折叠">−</Expander>
              <Icon name="stack" size={13} />
              <Root>图层</Root>
            </TreeRow>
            <TreeRow $level={1}>
              <Expander aria-label="折叠">−</Expander>
              <LayerLabel><Check type="checkbox" defaultChecked />多图幅项目</LayerLabel>
            </TreeRow>
            <SymbolRow><Swatch /><Caret /></SymbolRow>
            <TreeRow $level={1}>
              <Expander aria-label="展开">+</Expander>
              <LayerLabel><Check type="checkbox" defaultChecked />一万分幅</LayerLabel>
            </TreeRow>
          </Tree>
        </Panel>

        <MapColumn>
          <MapRow>
            <SheetMap />
            <VScroll>
              <Arrow $dir="up" />
              <VTrack><VThumb /></VTrack>
              <Arrow $dir="down" />
            </VScroll>
          </MapRow>
          <HBar>
            <ViewButton $on aria-label="数据视图"><svg width="8" height="8"><path d="M.5.5h7v7h-7z" fill="#d9e8a2" stroke="#555" /><path d="m2 6 4-4" stroke="#5b9a55" /></svg></ViewButton>
            <ViewButton aria-label="布局视图"><svg width="8" height="8"><path d="M1.500.5h4l1 1v6h-5z" fill="#fff" stroke="#333" /><path d="M3 3h2v3H3z" fill="#477aa8" /></svg></ViewButton>
            <Sep $wide />
            <ViewButton aria-label="刷新"><svg width="8" height="8" fill="none" stroke="#2a65a5" strokeWidth="1.500"><path d="M1 4c0-3 4-4 6-1V1M7 4c0 3-4 4-6 1v2" /></svg></ViewButton>
            <ViewButton aria-label="暂停"><svg width="8" height="7"><path d="M1 1h2v5H1zM5 1h2v5H5z" fill="#1f5aa3" /></svg></ViewButton>
            <Arrow $dir="left" />
            <HTrack><HThumb /></HTrack>
          </HBar>
        </MapColumn>

        <SideTabs>
          <SideTab><Icon name="catalog" /><TabText>目录</TabText></SideTab>
          <SideTab><Icon name="search" /><TabText>搜索</TabText></SideTab>
        </SideTabs>
      </Main>

      <StatusBar>37588771.716  4445186.347 未</StatusBar>

      <Taskbar>
        <StartButton aria-label="开始">
          <svg width="30" height="30" viewBox="0 0 30 30">
            <circle cx="15" cy="15" r="14" fill="#1d4667" stroke="#7ca5c2" />
            <path d="M3 12a12 12 0 0 1 24 0c-5 4-18 5-24 0" fill="#9bb8cb" opacity=".6" />
            <path d="M8 9c2-1.500 4-1.500 6 0l-1.500 5.500c-2-1.200-4-1.200-6 0z" fill="#f0642d" />
            <path d="M15.500 9.500c2 1.300 4 1.300 6.500 0L20.500 15c-2 1.300-4 1.300-6.500 0z" fill="#93c83e" />
            <path d="M6.200 16c2-1.200 4-1.200 6 0l-1.500 5.500c-2-1.200-4-1.200-6 0z" fill="#4aa4e2" />
            <path d="M13.600 16.500c2 1.300 4 1.300 6.500 0L18.600 22c-2 1.300-4 1.300-6.500 0z" fill="#fcc931" />
          </svg>
        </StartButton>
        <AppButton $look="open" aria-label="Internet Explorer">
          <svg width="26" height="26" viewBox="0 0 26 26">
            <path fillRule="evenodd" d="M13.500 4C8 4 4 8 4 13.500S8 23 13.500 23c4 0 7.500-2.300 8.800-6h-5.200c-.8 1.300-2 2-3.600 2-2.500 0-4.200-1.500-4.500-4h13.600C23 8.500 19.500 4 13.500 4M9.200 11.500C9.800 9.300 11.300 8 13.500 8s3.800 1.300 4.200 3.500z" fill="#48b4e8" stroke="#2074b8" strokeWidth=".6" />
            <path d="M5 24.500c-7-1-2-12 6-18S25 1 24 7c-.5-4-6-2.500-11.500 2S2 20 5 24.500" fill="#f6c62c" stroke="#d39b15" strokeWidth=".5" />
          </svg>
        </AppButton>
        <AppButton aria-label="Excel">
          <svg width="26" height="26" viewBox="0 0 26 26">
            <path d="M13 4.500h11.500v17H13z" fill="#fff" stroke="#207245" />
            <path d="M15 8h8M15 11h8M15 14h8M15 17h8" stroke="#207245" strokeWidth="1.800" />
            <path d="M19 6v14" stroke="#fff" />
            <path d="M1 3.500 15.500 1v24L1 22.500z" fill="#1d6f42" />
            <path d="m5 9 6 8.500M11 9l-6 8.500" stroke="#fff" strokeWidth="2" />
          </svg>
        </AppButton>
        <AppButton $look="active" aria-label="ArcMap">
          <svg width="27" height="27" viewBox="0 0 27 27">
            <circle cx="13" cy="13" r="12" fill="#154875" />
            <path d="M17 3c4 1 7 5 7 9s-2 5-4 6l-3-5 2-3zM3 16c3 0 4 2 7 4l-1 4c-3-1-5-4-6-8" fill="#438d4f" />
            <path d="M3 9c3-4 6-5 9-5" stroke="#78b5d9" strokeWidth="2" fill="none" />
            <circle cx="12" cy="11" r="6" fill="#bfe0f3" stroke="#f1f5f7" strokeWidth="2" />
            <path d="M9 12c0-3 2-4 4-4" stroke="#fff" strokeWidth="2" fill="none" />
            <path d="m17 16 8 8" stroke="#5e3b29" strokeWidth="4" />
            <path d="m17 16 7 7" stroke="#d1a178" strokeWidth="1.500" />
          </svg>
        </AppButton>
        <AppButton $look="open" aria-label="资源管理器">
          <svg width="28" height="26" viewBox="0 0 28 26">
            <path d="M3 4h9l2 2h11v17H3z" fill="#efcf73" stroke="#c39d43" />
            <path d="M5 2h4v3H5zM19 3h4v4h-4z" fill="#fff" stroke="#bb9f5a" strokeWidth=".5" />
            <path d="M6 2h2v2H6z" fill="#3aa04c" /><path d="M20 4h2v2h-2z" fill="#3a76c7" /><path d="M12 4h4v2h-4z" fill="#c95032" />
            <path d="M2 9h24l-1 14H3z" fill="#fbeaaa" stroke="#d6b65c" />
            <path d="M6 24v-5c0-3 2-4 4-4h8c2 0 4 1 4 4v5h-4v-4h-8v4z" fill="#8fcdee" stroke="#5ba6d4" />
          </svg>
        </AppButton>
        <AppButton $look="open" aria-label="Word">
          <svg width="26" height="26" viewBox="0 0 26 26">
            <path d="M13 4.500h11.500v17H13z" fill="#fff" stroke="#2b579a" />
            <path d="M16 8h7M16 11h7M16 14h7M16 17h7" stroke="#2b579a" strokeWidth="1.200" />
            <path d="M1 3.500 15.500 1v24L1 22.500z" fill="#2b579a" />
            <path d="m3.500 9 2 8L8 9.500l2.500 7.500 2-8" stroke="#fff" strokeWidth="1.700" fill="none" />
          </svg>
        </AppButton>
        <AppButton aria-label="画图">
          <svg width="26" height="26" viewBox="0 0 26 26">
            <path d="M2 16C2 9 8 5 14 6s8 5 8 9-3 8-8 8c-3 0-2-3-4-4s-3 2-5 1-3-2-3-4" fill="#e4edf2" stroke="#90a9b8" />
            <circle cx="6" cy="13" r="2" fill="#e2463a" /><circle cx="10" cy="9.500" r="2" fill="#f3bd2f" /><circle cx="15" cy="9.500" r="2" fill="#4fa94c" /><circle cx="8" cy="17" r="1.500" fill="#3b79ce" />
            <path d="m13 22 7-14" stroke="#e58f2a" strokeWidth="2.500" />
            <path d="m19 8 2-6c2-2 4-1 4 1l-4 6z" fill="#bd7c4a" />
          </svg>
        </AppButton>
        <Tray>
          <TrayButton $w={18} aria-label="输入法"><Seal>極</Seal></TrayButton>
          <TrayButton $w={18} aria-label="帮助"><svg width="12" height="12"><circle cx="6" cy="6" r="5.500" fill="#1720a8" stroke="#b5bed8" /><path d="M4 4.500c0-2.500 4-2.500 4-.3C8 5.500 6 5.500 6 7.300M6 8.300v1.400" fill="none" stroke="#fff" strokeWidth="1.500" /></svg></TrayButton>
          <TrayButton $w={17} aria-label="语言栏选项"><svg width="8" height="16" fill="none" stroke="#fff"><path d="M2.500 3V1.500h5v3H6M.5 3.500h5v2h-5z" /><path d="M2 12h4l-2 2z" fill="#fff" stroke="none" /></svg></TrayButton>
          <TrayButton $w={31} aria-label="USB"><svg width="9" height="14"><path d="M2 0h5v4H2z" fill="#ddd" /><path d="M1 4h7v9H1z" fill="#3e9c36" stroke="#a9d6a0" strokeWidth=".6" /><path d="M4.500 5v7M3 8v2h3V7" fill="none" stroke="#fff" strokeWidth=".8" /></svg></TrayButton>
          <TrayButton $w={12} aria-label="显示隐藏的图标"><svg width="6" height="4"><path d="M0 4 3 1l3 3z" fill="#fff" /></svg></TrayButton>
          <TrayButton $w={27} aria-label="代理"><svg width="13" height="13"><circle cx="6.500" cy="6.500" r="6" fill="#333" stroke="#777" /><circle cx="6.500" cy="6.500" r="3.800" fill="#08d32b" /></svg></TrayButton>
          <TrayButton $w={12} aria-label="同步"><svg width="13" height="13"><circle cx="6.500" cy="6.500" r="6" fill="#333" stroke="#777" /><circle cx="6.500" cy="6.500" r="3.800" fill="#08d32b" /><path d="M6 7h7v5H6z" fill="#e8eef5" stroke="#445" strokeWidth=".5" /></svg></TrayButton>
          <TrayButton $w={24} aria-label="防护"><svg width="13" height="13"><path d="M6.500.5 12 2v5c0 3-3 5-5.500 5.500C4 12 1 10 1 7V2z" fill="#62b735" stroke="#eef5e6" strokeWidth="1.200" /><path d="m8 2-4 5h2l-1 4 4-5H7z" fill="#fff" /></svg></TrayButton>
          <TrayButton $w={16} aria-label="操作中心"><svg width="12" height="12"><path d="M1.500 1v11" stroke="#fff" strokeWidth="1.200" /><path d="M2 2h4v1h5l-1 2 1 2H6V6H2z" fill="#fff" /></svg></TrayButton>
          <TrayButton $w={22} aria-label="安全"><svg width="13" height="13"><circle cx="6.500" cy="6.500" r="6" fill="#f2d713" stroke="#c5b21a" /><path d="M5 2.500h3V5h2.500v3H8v2.500H5V8H2.500V5H5z" fill="#138c37" /></svg></TrayButton>
          <TrayButton $w={18} aria-label="网络"><svg width="13" height="13" fill="none" stroke="#fff"><path d="M4.500 3.500h8v6h-8zM6 12.500h5M8.500 10v2M2.500 1v3M.5 2.500h4M2.500 4v7.500H5" strokeWidth="1.200" /></svg></TrayButton>
          <TrayButton $w={20} aria-label="音量"><svg width="13" height="13"><path d="M1 5h2l4-4v11L3 8.500H1z" fill="#fff" /><path d="M9 4c1.500 1.500 1.500 3.500 0 5M11 2c2.500 2.500 2.500 6.500 0 9" fill="none" stroke="#dbe6f0" /></svg></TrayButton>
          <Clock dateTime="2018-10-11T23:04">23:04<br />2018/10/11</Clock>
          <ShowDesktop aria-label="显示桌面" />
        </Tray>
      </Taskbar>

      <ImeBar>
        <ImeRow>
          <ImeButton $w={13} aria-label="收起"><svg width="6" height="7" fill="none" stroke="#fff"><path d="m1 3 2-2 2 2M1 6l2-2 2 2" /></svg></ImeButton>
          <ImeButton $w={42} $on>英文</ImeButton>
          <ImeButton $w={16} aria-label="半角"><svg width="8" height="8"><path d="M3 0c4 1 4 7-2 7 3-2 3-4 2-7" fill="#fff" /></svg></ImeButton>
          <ImeButton $w={8} aria-label="标点"><svg width="8" height="6"><circle cx="1.500" cy="2.500" r="1.200" fill="#fff" /><path d="M5 1h2v2L5 5z" fill="#fff" /></svg></ImeButton>
        </ImeRow>
        <ImeRow>
          <ImeButton $w={18} aria-label="手写"><svg width="11" height="11" viewBox="0 0 16 16"><path d="m4 15-3-6c-1-1 1-2 2 0l1 1-2-6c0-1 1-2 2 0l2 4V2c0-1 2-1 2 0l1 5 1-4c1-1 2 0 2 1l-1 5 2-2c1-1 2 0 1 1l-4 7z" fill="#fff" /></svg></ImeButton>
          <ImeButton $w={15} aria-label="查找"><svg width="12" height="11" fill="none" stroke="#fff"><circle cx="4" cy="4" r="3" strokeWidth="1.200" /><path d="m6 6 5 4" strokeWidth="2" /></svg></ImeButton>
          <ImeButton $w={14}>简</ImeButton>
          <ImeButton $w={14} aria-label="工具"><svg width="9" height="9" fill="none" stroke="#fff"><path d="M.5 1.500h3v2h-3zM.5 5.500h3v3h-3zM5.500.5h3v3h-3zM5.500 5.500h3v3h-3z" /></svg></ImeButton>
          <ImeButton $w={20} aria-label="软键盘"><svg width="14" height="9" fill="none" stroke="#2d9a35"><path d="M.5.5h13v8H.5zM2 3h10M2 5h10M4 7h6" strokeDasharray="1 1" /></svg></ImeButton>
        </ImeRow>
      </ImeBar>
      <BallSlot><Ball aria-label="加速球">14</Ball></BallSlot>
    </Desktop>
  );
}
